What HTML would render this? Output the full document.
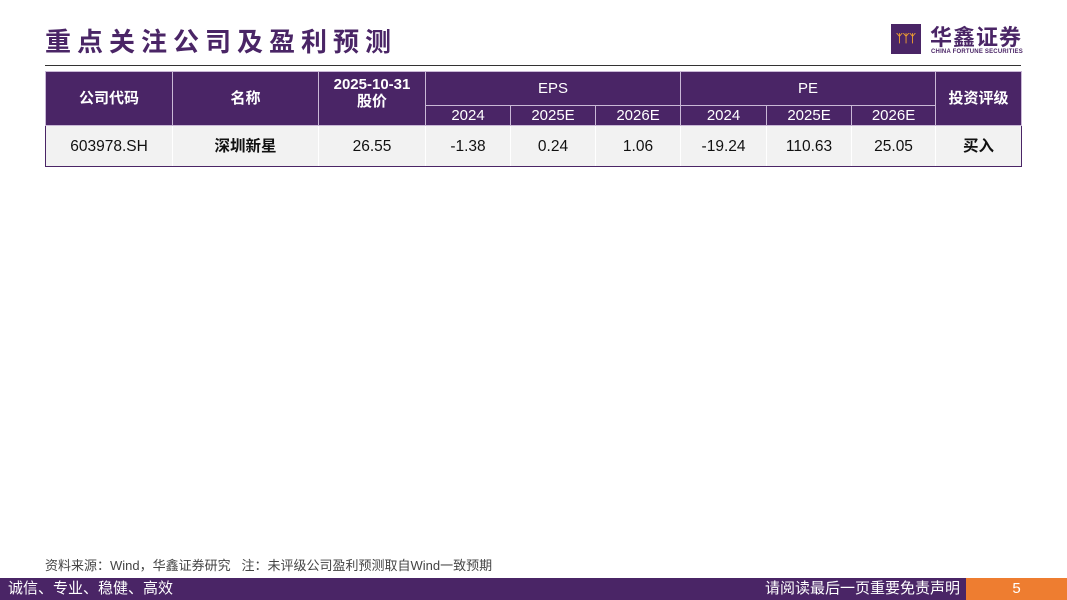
<!DOCTYPE html>
<html><head><meta charset="utf-8"><style>
*{margin:0;padding:0;box-sizing:border-box}
body{width:1067px;height:600px;position:relative;background:#fff;font-family:"Liberation Sans","Noto Sans CJK SC",sans-serif;overflow:hidden}
.title{position:absolute;left:45px;top:22px;font-size:26px;font-weight:bold;color:#4a2566;letter-spacing:6px;white-space:nowrap}
.rule{position:absolute;left:45px;top:65px;width:976px;height:1px;background:#333}
.logo{position:absolute;left:891px;top:24px;width:30px;height:30px;background:#4a2566;color:#f0a030;font-size:11px;text-align:center;line-height:30px;font-weight:bold}
.lt{position:absolute;left:930px;top:20px;font-size:22px;color:#4a2566;font-weight:bold;letter-spacing:1px}
.le{position:absolute;left:931px;top:49px;font-size:6px;color:#4a2566;font-weight:bold;letter-spacing:0.2px}
table{position:absolute;left:45px;top:71px;border-collapse:collapse;width:976px;table-layout:fixed}
td{text-align:center;color:#fff;font-size:15px;border:1px solid #c9b8d6;padding:0;line-height:17px}
.h td{background:#4a2566}
.b td{background:#f2f2f2;color:#111;height:41px;border-color:#fff;font-size:15.5px}
table{border:1px solid #4a2566}
.b td:first-child{border-left:1px solid #4a2566}
.b td:last-child{border-right:1px solid #4a2566}
.b td{border-bottom:1px solid #4a2566}
.note{position:absolute;left:45px;top:555px;font-size:13px;color:#444;white-space:nowrap}
.foot{position:absolute;left:0;top:578px;width:1067px;height:22px;background:#4a2566;color:#fff;font-size:15px;line-height:22px}
.foot .l{position:absolute;left:8px}
.foot .r{position:absolute;right:107px}
.foot .p{position:absolute;right:0;width:101px;height:22px;background:#ee7d30;text-align:center}
</style></head><body>
<div class="title">重点关注公司及盈利预测</div>
<div class="rule"></div>
<div class="logo">ᛉᛉᛉ</div>
<div class="lt">华鑫证券</div>
<div class="le">CHINA FORTUNE SECURITIES</div>
<table>
<colgroup><col style="width:127px"><col style="width:146px"><col style="width:107px"><col style="width:85px"><col style="width:85px"><col style="width:85px"><col style="width:86px"><col style="width:85px"><col style="width:84px"><col style="width:86px"></colgroup>
<tr class="h" style="height:34px"><td rowspan="2" style="font-weight:bold">公司代码</td><td rowspan="2" style="font-weight:bold">名称</td><td rowspan="2" style="font-weight:bold;padding-bottom:12px">2025-10-31<br>股价</td><td colspan="3">EPS</td><td colspan="3">PE</td><td rowspan="2" style="font-weight:bold">投资评级</td></tr>
<tr class="h" style="height:20px"><td>2024</td><td>2025E</td><td>2026E</td><td>2024</td><td>2025E</td><td>2026E</td></tr>
<tr class="b"><td>603978.SH</td><td style="font-weight:bold">深圳新星</td><td>26.55</td><td>-1.38</td><td>0.24</td><td>1.06</td><td>-19.24</td><td>110.63</td><td>25.05</td><td style="font-weight:bold">买入</td></tr>
</table>
<div class="note">资料来源：Wind，华鑫证券研究&nbsp;&nbsp;&nbsp;注：未评级公司盈利预测取自Wind一致预期</div>
<div class="foot"><span class="l">诚信、专业、稳健、高效</span><span class="r">请阅读最后一页重要免责声明</span><span class="p">5</span></div>
</body></html>
